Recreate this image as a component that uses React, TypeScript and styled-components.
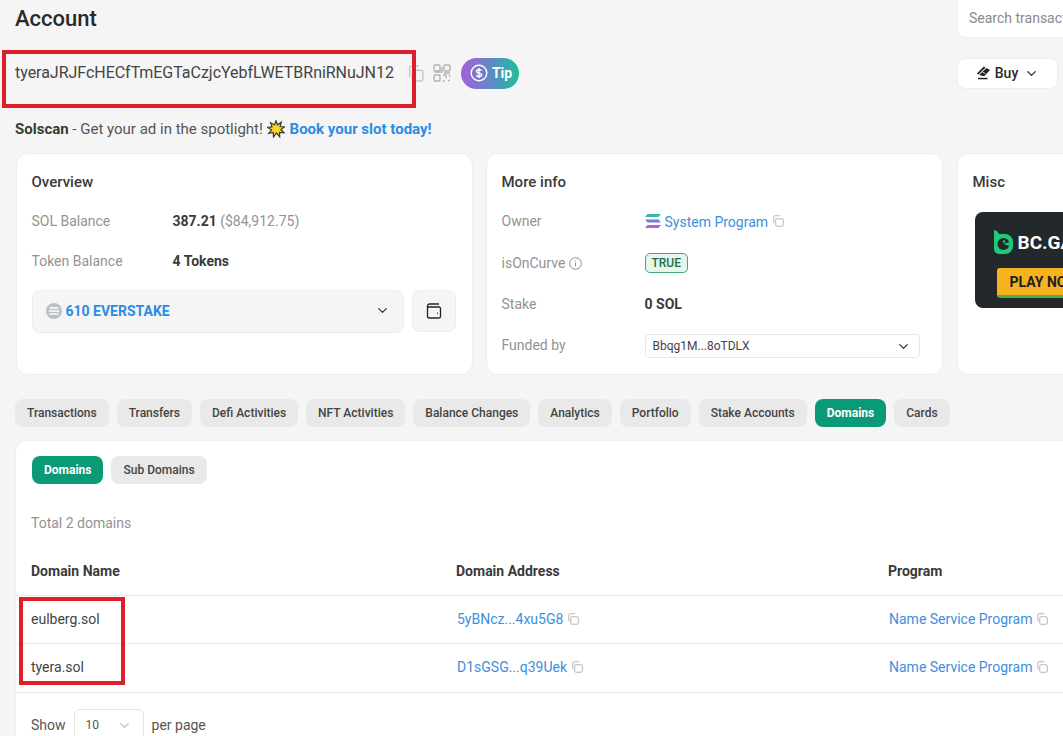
import styled, { createGlobalStyle } from "styled-components";
import { ChevronDown } from "lucide-react";

const GlobalStyle = createGlobalStyle`
  html, body {
    margin: 0;
    padding: 0;
    background: #f5f5f5;
  }
  body {
    font-family: Roboto, "Liberation Sans", sans-serif;
    color: #2b2b2b;
    overflow: hidden;
  }
`;

const Page = styled.div`
  position: relative;
  width: 1063px;
  height: 736px;
  overflow: hidden;
  padding-left: 15px;
  box-sizing: border-box;
`;

const Content = styled.div`
  width: 1400px;
`;

const TopRow = styled.div`
  display: flex;
  align-items: center;
  justify-content: space-between;
  width: 1048px;
`;

const HeaderRow = styled(TopRow)`
  height: 38px;
`;

const Title = styled.h1`
  margin: 0;
  font-size: 22px;
  font-weight: 500;
  color: #2a2a2a;
  line-height: 38px;
`;

const SearchBox = styled.div`
  width: 106px;
  height: 38px;
  padding-left: 11px;
  box-sizing: border-box;
  background: #fff;
  border: 1px solid #efefef;
  border-right: none;
  border-top: none;
  border-radius: 0 0 0 8px;
  color: #8a8a8a;
  font-size: 14px;
  line-height: 36px;
  white-space: nowrap;
  overflow: hidden;
`;

const AddressRow = styled(TopRow)`
  margin-top: 20px;
  height: 30px;
`;

const AddressGroup = styled.div`
  display: flex;
  align-items: center;
`;

const Address = styled.span`
  font-size: 16px;
  letter-spacing: -0.03px;
  color: #444;
  margin-right: 13px;
  padding-bottom: 2px;
`;

const IconSlot = styled.span`
  display: inline-flex;
  margin-right: 9px;
`;

const TipButton = styled.div`
  display: flex;
  align-items: center;
  gap: 4px;
  height: 31px;
  width: 58px;
  margin-left: 1px;
  padding-left: 9px;
  box-sizing: border-box;
  border-radius: 16px;
  background: linear-gradient(90deg, #a85ed8 0%, #5a8cc4 55%, #1bbf9c 100%);
  color: #fff;
  font-size: 14px;
  font-weight: 700;
`;

const BuyButton = styled.div`
  width: 101px;
  height: 31px;
  margin-right: 5px;
  box-sizing: border-box;
  display: flex;
  align-items: center;
  justify-content: center;
  gap: 4px;
  background: #fff;
  border: 1px solid #eee;
  border-radius: 8px;
  font-size: 14px;
  font-weight: 500;
  color: #2a2a2a;
`;

const Banner = styled.div`
  display: flex;
  align-items: center;
  margin-top: 30px;
  height: 22px;
  font-size: 15px;
  color: #555;
`;

const BannerLink = styled.span`
  margin-left: 5px;
  color: #2b8ce6;
  font-weight: 700;
`;

const Strong = styled.b`
  font-weight: 700;
  color: #3a3a3a;
  white-space: pre;
`;

const Cards = styled.div`
  display: flex;
  gap: 13px;
  margin-top: 13px;
  margin-left: 1px;
`;

const Card = styled.section`
  width: 457px;
  height: 222px;
  box-sizing: border-box;
  padding: 20px 16px 0 14.5px;
  background: #fff;
  border: 1px solid #eeeeee;
  border-radius: 12px;
`;

const MiscCard = styled(Card)`
  margin-left: 1px;
`;

const CardTitle = styled.div`
  font-size: 15px;
  font-weight: 500;
  color: #3a3a3a;
  line-height: 17px;
`;

const InfoRow = styled.div<{ $top: number }>`
  display: flex;
  align-items: center;
  height: 20px;
  margin-top: ${(p) => p.$top}px;
  font-size: 14px;
`;

const Label = styled.div<{ $w: number }>`
  display: flex;
  align-items: center;
  gap: 4px;
  width: ${(p) => p.$w}px;
  flex-shrink: 0;
  color: #939393;
`;

const Value = styled.span`
  font-weight: 700;
  color: #3a3a3a;
  white-space: pre;
`;

const Muted = styled.span`
  color: #939393;
`;

const LinkText = styled.span`
  color: #3d8fdc;
  font-size: 14px;
`;

const OwnerLink = styled(LinkText)`
  margin: 2px 4px 0;
`;

const StakeRow = styled.div`
  display: flex;
  gap: 8px;
  margin-top: 19px;
`;

const StakeSelect = styled.div`
  flex: 1;
  height: 43px;
  box-sizing: border-box;
  padding: 0 13px 2px 13px;
  display: flex;
  align-items: center;
  background: #f5f5f5;
  border: 1px solid #ececec;
  border-radius: 8px;
  color: #2b8ce6;
  font-size: 14px;
  font-weight: 700;
  gap: 4px;
`;

const Spacer = styled.span`
  flex: 1;
`;

const WalletButton = styled.div`
  width: 44px;
  height: 42px;
  box-sizing: border-box;
  display: flex;
  align-items: center;
  justify-content: center;
  background: #f5f5f5;
  border: 1px solid #ececec;
  border-radius: 8px;
`;

const TrueBadge = styled.span`
  box-sizing: border-box;
  height: 20px;
  padding: 0 6px;
  display: inline-flex;
  align-items: center;
  background: #e6f6ec;
  border: 1px solid #3fa873;
  border-radius: 5px;
  color: #1e6e45;
  font-size: 12px;
  font-weight: 500;
`;

const FunderSelect = styled.div`
  width: 275px;
  height: 24px;
  margin-top: 2px;
  box-sizing: border-box;
  padding: 0 8px 0 7px;
  display: flex;
  align-items: center;
  justify-content: space-between;
  background: #fff;
  border: 1px solid #e8e8e8;
  border-radius: 4px;
  font-size: 12px;
  color: #444;
`;

const AdBanner = styled.div`
  width: 200px;
  height: 96px;
  margin-top: 21px;
  margin-left: 2px;
  padding: 18px 0 0 18px;
  box-sizing: border-box;
  background: #23282a;
  border-radius: 8px;
  overflow: hidden;
`;

const AdLogo = styled.div`
  display: flex;
  align-items: center;
  gap: 5px;
  height: 24px;
  color: #fff;
  font-size: 19px;
  font-weight: 700;
  white-space: nowrap;
`;

const AdButton = styled.div`
  width: 140px;
  height: 30px;
  margin-top: 14px;
  margin-left: 4px;
  padding-left: 13px;
  box-sizing: border-box;
  background: #f6b21f;
  border-bottom: 3px solid #4caf50;
  border-radius: 3px;
  color: #1d1d1d;
  font-size: 14px;
  font-weight: 700;
  line-height: 28px;
  white-space: nowrap;
`;

const Tabs = styled.div`
  display: flex;
  gap: 8px;
`;

const TabRow = styled(Tabs)`
  margin-top: 24px;
`;

const Tab = styled.div<{ $active?: boolean }>`
  height: 28px;
  padding: 0 12px;
  display: flex;
  align-items: center;
  border-radius: 8px;
  font-size: 12px;
  font-weight: ${(p) => (p.$active ? 700 : 500)};
  background: ${(p) => (p.$active ? "#0b9a78" : "#e9e9e9")};
  color: ${(p) => (p.$active ? "#fff" : "#444")};
`;

const Panel = styled.section`
  margin-top: 13px;
  background: #fff;
  border: 1px solid #eeeeee;
  border-radius: 12px 0 0 0;
  height: 320px;
  padding-top: 15px;
  box-sizing: border-box;
`;

const SubTabs = styled(Tabs)`
  padding-left: 16px;
`;

const Total = styled.div`
  margin: 30px 0 0 15px;
  font-size: 14px;
  line-height: 18px;
  color: #939393;
`;

const TableRow = styled.div<{ $h: number }>`
  display: grid;
  grid-template-columns: 425px 432px 1fr;
  align-items: center;
  height: ${(p) => p.$h}px;
  padding: 0 0 2px 15px;
  box-sizing: border-box;
  border-bottom: 1px solid #ececec;
  font-size: 14px;
`;

const HeadCell = styled.div`
  font-weight: 700;
  font-size: 14px;
  color: #3a3a3a;
`;

const HeadRow = styled(TableRow)`
  margin-top: 18px;
  padding-bottom: 3px;
`;

const NameCell = styled.div`
  color: #444;
`;

const AddrCell = styled.div`
  display: flex;
  align-items: center;
  gap: 4px;
  padding-left: 1px;
`;

const Pager = styled.div`
  display: flex;
  align-items: center;
  gap: 8px;
  margin-top: 16px;
  padding-left: 15px;
  font-size: 14px;
  color: #555;
`;

const PageSize = styled.div`
  width: 70px;
  height: 32px;
  padding: 0 11px;
  box-sizing: border-box;
  display: flex;
  align-items: center;
  justify-content: space-between;
  border: 1px solid #e4e4e4;
  border-radius: 6px;
  font-size: 12px;
`;

const Annotation = styled.div<{ $x: number; $y: number; $w: number; $h: number }>`
  position: absolute;
  left: ${(p) => p.$x}px;
  top: ${(p) => p.$y}px;
  width: ${(p) => p.$w}px;
  height: ${(p) => p.$h}px;
  box-sizing: border-box;
  border: 4.5px solid #dc1f2b;
  pointer-events: none;
`;

const CopyIcon = ({ size = 12, color = "#b5b5b5" }: { size?: number; color?: string }) => (
  <svg width={size} height={size} viewBox="0 0 16 16" fill="none" stroke={color} strokeWidth="1.3">
    <rect x="5" y="5" width="10" height="10" rx="1.5" />
    <path d="M2.5 11V2.5A1.5 1.5 0 0 1 4 1h7" />
  </svg>
);

const QrIcon = () => (
  <svg width="18" height="18" viewBox="0 0 18 18" fill="none" stroke="#b3b3b3" strokeWidth="1.4">
    <rect x="1" y="1" width="6" height="6" rx="1" />
    <rect x="11" y="1" width="6" height="6" rx="1" />
    <rect x="1" y="11" width="6" height="6" rx="1" />
    <path d="M10 11h3v3M16.500 11v2M10 17h2M15 16.500h2M9 3v5H1.500M11 9h6" />
  </svg>
);

const TipIcon = () => (
  <svg width="18" height="18" viewBox="0 0 18 18" fill="none" stroke="#fff" strokeWidth="1.4">
    <circle cx="9" cy="9" r="7.800" />
    <path d="M11.500 6.800C11 5.800 10 5.500 9 5.500c-1.400 0-2.500.6-2.500 1.800 0 2.700 5.200 1 5.200 3.500 0 1.200-1.200 1.800-2.700 1.800-1.200 0-2.200-.5-2.700-1.500M9 4v10" />
  </svg>
);

const BuyIcon = () => (
  <svg width="15" height="16" viewBox="0 0 15 16" fill="#222">
    <path d="M.8 8.600 7.900 1.500l1.600.9-7.100 7.100z" />
    <path d="M3.200 10 10.300 2.900l3.800 2.200-6 6.200z" />
    <path d="M2 12.800h9.500v1.500H2z" />
    <path d="M6.500 7l2.800 1.600" stroke="#fff" strokeWidth="0.900" />
  </svg>
);

const BurstIcon = () => (
  <svg width="18" height="18" viewBox="0 0 18 18">
    <path
      d="M9 .8l1.500 4 3.800-2.600-1.200 4.300 4.300.4-3.500 2.600 3 3.200-4.400-.4.200 4.500L9.500 13l-3 3.900-.3-4.500-4.400 1 2.700-3.600L.6 7.400l4.400-.5L3.600 2.700l3.900 2.200z"
      fill="#f5d82c"
      stroke="#3b3b2a"
      strokeWidth="1.200"
    />
  </svg>
);

const StakeCoin = () => (
  <svg width="16" height="16" viewBox="0 0 16 16">
    <circle cx="8" cy="8" r="8" fill="#b9c0c9" />
    <path d="M3.500 5h9M2.800 8h10.400M3.500 11h9" stroke="#eceef0" strokeWidth="1.800" />
  </svg>
);

const WalletIcon = () => (
  <svg width="16" height="16" viewBox="0 0 16 16" fill="none" stroke="#222" strokeWidth="1.300">
    <path d="M13 1H3.500A2 2 0 0 0 1.500 3v10a2 2 0 0 0 2 2h9.500a1.500 1.500 0 0 0 1.500-1.500v-8A1.500 1.500 0 0 0 13 4H1.800" />
    <path d="M11 10.200h.8" strokeWidth="1.600" />
  </svg>
);

const SolanaIcon = () => (
  <svg width="16" height="14" viewBox="0 0 16 14">
    <path d="M2.500 0H16l-2.500 3H0z" fill="#3bb7a5" />
    <path d="M0 5.500h13.500L16 8.500H2.500z" fill="#6c7fd0" />
    <path d="M2.500 11H16l-2.500 3H0z" fill="#b45fdc" />
  </svg>
);

const InfoIcon = () => (
  <svg width="13" height="13" viewBox="0 0 13 13" fill="none" stroke="#8c8c8c" strokeWidth="1">
    <circle cx="6.500" cy="6.500" r="5.800" />
    <path d="M6.500 5.800v3.500M6.500 3.500v1" />
  </svg>
);

const BcLogo = () => (
  <svg width="20" height="24" viewBox="0 0 20 24">
    <path d="M1 0c2.500.3 4.300 1.800 4.800 4H12a8 8 0 0 1 8 8v4a8 8 0 0 1-8 8H6a5 5 0 0 1-5-5z" fill="#1fc97a" />
    <circle cx="10.500" cy="14" r="6" fill="#23282a" />
    <path d="M10.500 14l6-2v4z" fill="#1fc97a" />
    <circle cx="11" cy="11.500" r="1.300" fill="#1fc97a" />
  </svg>
);

const tabs = [
  "Transactions",
  "Transfers",
  "Defi Activities",
  "NFT Activities",
  "Balance Changes",
  "Analytics",
  "Portfolio",
  "Stake Accounts",
  "Domains",
  "Cards",
];

const domains = [
  { name: "eulberg.sol", addr: "5yBNcz...4xu5G8", h: 48 },
  { name: "tyera.sol", addr: "D1sGSG...q39Uek", h: 49 },
];

export default function App() {
  return (
    <Page>
      <GlobalStyle />
      <Content>
        <HeaderRow>
          <Title>Account</Title>
          <SearchBox>Search transactions</SearchBox>
        </HeaderRow>

        <AddressRow>
          <AddressGroup>
            <Address>tyeraJRJFcHECfTmEGTaCzjcYebfLWETBRniRNuJN12</Address>
            <IconSlot>
              <CopyIcon size={17} color="#c4c4c4" />
            </IconSlot>
            <IconSlot>
              <QrIcon />
            </IconSlot>
            <TipButton>
              <TipIcon />
              Tip
            </TipButton>
          </AddressGroup>
          <BuyButton>
            <BuyIcon />
            Buy
            <ChevronDown size={15} strokeWidth={2} style={{ marginLeft: 2 }} />
          </BuyButton>
        </AddressRow>

        <Banner>
          <Strong>Solscan</Strong>
          &nbsp;- Get your ad in the spotlight!&nbsp;
          <BurstIcon />
          <BannerLink>Book your slot today!</BannerLink>
        </Banner>

        <Cards>
          <Card>
            <CardTitle>Overview</CardTitle>
            <InfoRow $top={20}>
              <Label $w={141}>SOL Balance</Label>
              <Value>387.21 </Value>
              <Muted>($84,912.75)</Muted>
            </InfoRow>
            <InfoRow $top={20}>
              <Label $w={141}>Token Balance</Label>
              <Value>4 Tokens</Value>
            </InfoRow>
            <StakeRow>
              <StakeSelect>
                <StakeCoin />
                610 EVERSTAKE
                <Spacer />
                <ChevronDown size={15} color="#333" />
              </StakeSelect>
              <WalletButton>
                <WalletIcon />
              </WalletButton>
            </StakeRow>
          </Card>

          <Card>
            <CardTitle>More info</CardTitle>
            <InfoRow $top={20}>
              <Label $w={143}>Owner</Label>
              <SolanaIcon />
              <OwnerLink>System Program</OwnerLink>
              <CopyIcon />
            </InfoRow>
            <InfoRow $top={22}>
              <Label $w={143}>
                isOnCurve <InfoIcon />
              </Label>
              <TrueBadge>TRUE</TrueBadge>
            </InfoRow>
            <InfoRow $top={21}>
              <Label $w={143}>Stake</Label>
              <Value>0 SOL</Value>
            </InfoRow>
            <InfoRow $top={21}>
              <Label $w={143}>Funded by</Label>
              <FunderSelect>
                Bbqg1M...8oTDLX
                <ChevronDown size={15} color="#333" />
              </FunderSelect>
            </InfoRow>
          </Card>

          <MiscCard>
            <CardTitle>Misc</CardTitle>
            <AdBanner>
              <AdLogo>
                <BcLogo />
                BC.GAME
              </AdLogo>
              <AdButton>PLAY NOW</AdButton>
            </AdBanner>
          </MiscCard>
        </Cards>

        <TabRow>
          {tabs.map((t) => (
            <Tab key={t} $active={t === "Domains"}>
              {t}
            </Tab>
          ))}
        </TabRow>

        <Panel>
          <SubTabs>
            <Tab $active>Domains</Tab>
            <Tab>Sub Domains</Tab>
          </SubTabs>
          <Total>Total 2 domains</Total>
          <HeadRow $h={46}>
            <HeadCell>Domain Name</HeadCell>
            <HeadCell>Domain Address</HeadCell>
            <HeadCell>Program</HeadCell>
          </HeadRow>
          {domains.map((d) => (
            <TableRow key={d.name} $h={d.h}>
              <NameCell>{d.name}</NameCell>
              <AddrCell>
                <LinkText>{d.addr}</LinkText>
                <CopyIcon />
              </AddrCell>
              <AddrCell>
                <LinkText>Name Service Program</LinkText>
                <CopyIcon />
              </AddrCell>
            </TableRow>
          ))}
          <Pager>
            Show
            <PageSize>
              10
              <ChevronDown size={15} color="#bbb" />
            </PageSize>
            per page
          </Pager>
        </Panel>
      </Content>

      <Annotation $x={2} $y={50} $w={414} $h={58} />
      <Annotation $x={19} $y={597} $w={106} $h={88} />
    </Page>
  );
}
